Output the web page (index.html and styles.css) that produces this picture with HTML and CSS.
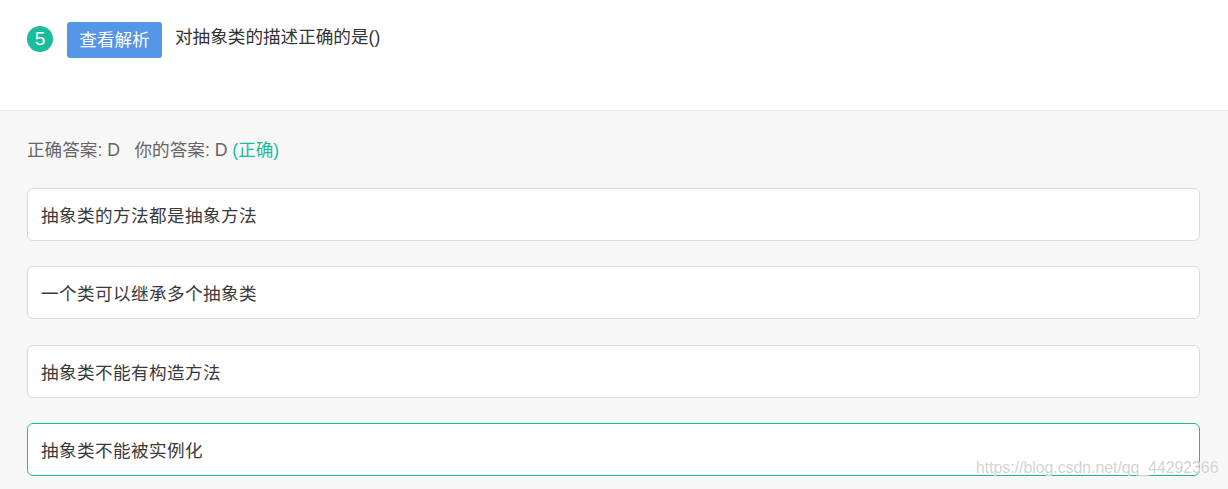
FILE: index.html
```html
<!DOCTYPE html>
<html lang="zh">
<head>
<meta charset="utf-8">
<link rel="stylesheet" href="styles.css">
</head>
<body>
<div class="page">
  <header class="question">
    <span class="num">5</span>
    <button class="btn">查看解析</button>
    <span class="title">对抽象类的描述正确的是()</span>
  </header>
  <section class="answers">
    <div class="result">正确答案: D&nbsp;&nbsp;&nbsp;你的答案: D <span class="ok">(正确)</span></div>
    <div class="options">
      <div class="option">抽象类的方法都是抽象方法</div>
      <div class="option">一个类可以继承多个抽象类</div>
      <div class="option">抽象类不能有构造方法</div>
      <div class="option selected">抽象类不能被实例化</div>
    </div>
  </section>
  <div class="watermark">https://blog.csdn.net/qq_44292366</div>
</div>
</body>
</html>
```
FILE: styles.css
```css
html, body {
  margin: 0;
  padding: 0;
  background: #f7f7f7;
}
.page {
  position: relative;
  width: 1228px;
  height: 489px;
  overflow: hidden;
  font-family: "Liberation Sans", "Noto Sans CJK SC", sans-serif;
  font-size: 17.6px;
  color: #333;
}
.question {
  background: #fff;
  border-bottom: 1px solid #e8e8e8;
  box-sizing: border-box;
  height: 111px;
  display: flex;
  align-items: flex-start;
  padding: 22px 0 0 27px;
}
.num {
  width: 26px;
  height: 26px;
  margin-top: 4px;
  border-radius: 50%;
  background: #1abc9c;
  color: #fff;
  font-size: 19px;
  line-height: 26px;
  text-align: center;
}
.btn {
  margin-left: 14px;
  width: 95px;
  height: 36px;
  border: none;
  border-radius: 3px;
  background: #5596e6;
  color: #fff;
  font-family: inherit;
  font-size: 17.6px;
  padding: 0;
  line-height: 36px;
}
.title {
  margin-left: 13px;
  line-height: 30px;
  color: #333;
}
.answers {
  padding: 0 28px 0 27px;
}
.result {
  color: #666;
  height: 77px;
  line-height: 78px;
}
.ok {
  color: #1abc9c;
}
.options {
  display: flex;
  flex-direction: column;
  gap: 25.4px;
}
.option {
  height: 53px;
  box-sizing: border-box;
  border: 1px solid #dcdcdc;
  border-radius: 6px;
  background: #fff;
  padding: 0 13px;
  display: flex;
  align-items: center;
  color: #3a3a3a;
  letter-spacing: 0.4px;
}
.option.selected {
  border-color: #1abc9c;
}
.watermark {
  position: absolute;
  left: 976px;
  top: 459px;
  font-size: 15.8px;
  color: rgba(205, 205, 205, 0.9);
  text-shadow: 0 0 1px #fff;
  white-space: nowrap;
}
```
